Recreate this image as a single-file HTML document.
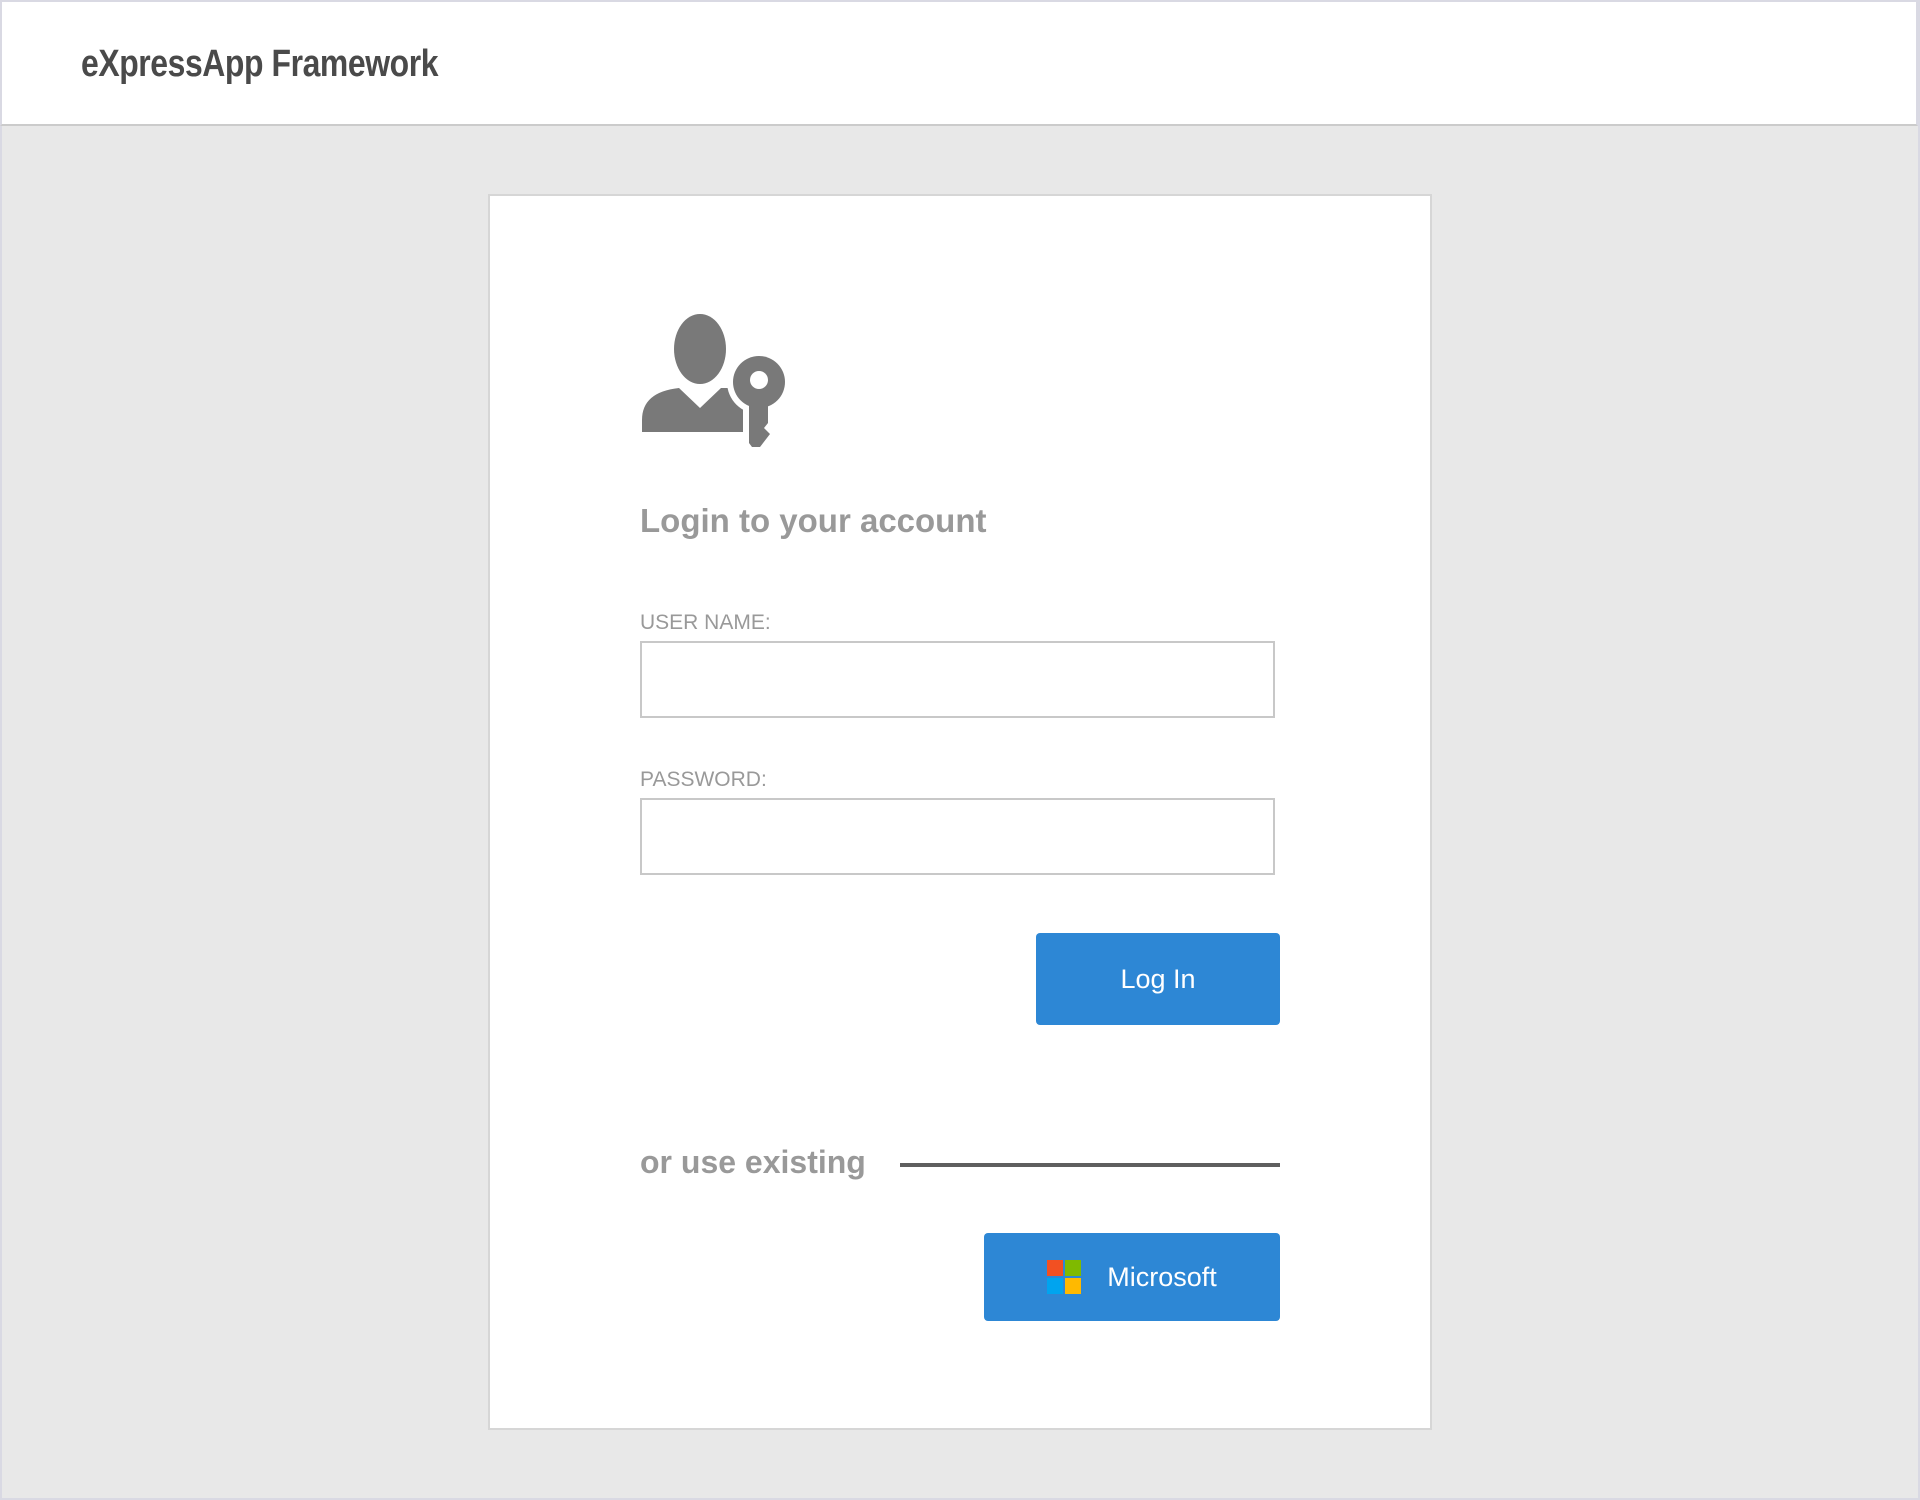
<!DOCTYPE html>
<html><head><meta charset="utf-8"><style>
*{margin:0;padding:0;box-sizing:border-box}
html,body{width:1920px;height:1500px;overflow:hidden}
body{background:#e8e8e8;font-family:"Liberation Sans",sans-serif;position:relative;border:2px solid #d9d9e3}
.hdr{position:absolute;left:-2px;top:-2px;width:1918px;height:126px;background:#fff;border:2px solid #d9d9e3;border-bottom:2px solid #cbcbcb}
.ttl{position:absolute;left:79px;top:41px;font-size:38px;font-weight:bold;color:#4a4a4a;transform:scaleX(0.84);transform-origin:left top;letter-spacing:-0.5px;white-space:nowrap}
.card{position:absolute;left:486px;top:192px;width:944px;height:1236px;background:#fff;border:2px solid #d6d6d6}
.abs{position:absolute}
.h{left:638px;top:500px;font-size:33px;font-weight:bold;color:#999;white-space:nowrap}
.lbl{font-size:21px;color:#999;left:638px}
.inp{left:638px;width:635px;height:77px;border:2px solid #c8c8c8;background:#fff}
.btn{background:#2d87d5;border-radius:4px;color:#fff;display:flex;align-items:center;justify-content:center;font-size:27px}
</style></head><body>
<div class="hdr"><div class="ttl">eXpressApp Framework</div></div>
<div class="card"></div>
<svg class="abs" style="left:636px;top:310px" width="150" height="140" viewBox="638 312 150 140">
<ellipse cx="700" cy="349" rx="26" ry="35" fill="#797979"/>
<path d="M642 432 L642 420 Q642 392 679 388 L700 408 L721 388 L745 388 L745 432 Z" fill="#797979"/>
<circle cx="759" cy="382" r="32" fill="#fff"/>
<rect x="743" y="400" width="30" height="50" fill="#fff"/>
<circle cx="759" cy="382" r="26" fill="#797979"/>
<path d="M749 400 L768 400 L768 423 L764 428 L770 434 L760 447 L752 447 L749 443 Z" fill="#797979"/>
<circle cx="759" cy="380" r="9" fill="#fff"/>
</svg>
<div class="abs h">Login to your account</div>
<div class="abs lbl" style="top:609px">USER NAME:</div>
<div class="abs inp" style="top:639px"></div>
<div class="abs lbl" style="top:766px">PASSWORD:</div>
<div class="abs inp" style="top:796px"></div>
<div class="abs btn" style="left:1034px;top:931px;width:244px;height:92px">Log In</div>
<div class="abs h" style="top:1142px;font-size:32px">or use existing</div>
<div class="abs" style="left:898px;top:1161px;width:380px;height:4px;background:#5f5f5f"></div>
<div class="abs btn" style="left:982px;top:1231px;width:296px;height:88px">
<svg width="34" height="34" viewBox="0 0 34 34" style="margin-right:26px"><rect x="0" y="0" width="16" height="16" fill="#f25022"/><rect x="18" y="0" width="16" height="16" fill="#7fba00"/><rect x="0" y="18" width="16" height="16" fill="#00a4ef"/><rect x="18" y="18" width="16" height="16" fill="#ffb900"/></svg>Microsoft</div>
</body></html>
